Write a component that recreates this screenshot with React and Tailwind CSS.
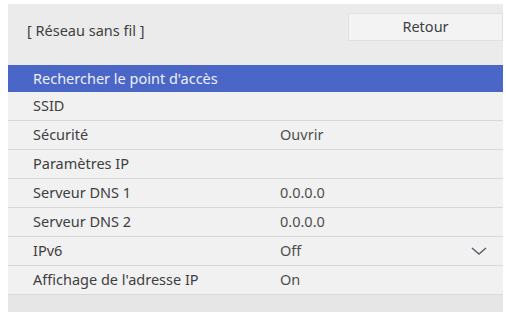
const rows = [
    { label: 'SSID', value: '' },
    { label: 'Sécurité', value: 'Ouvrir' },
    { label: 'Paramètres IP', value: '' },
    { label: 'Serveur DNS 1', value: '0.0.0.0' },
    { label: 'Serveur DNS 2', value: '0.0.0.0' },
    { label: 'IPv6', value: 'Off', chevron: true },
    { label: "Affichage de l'adresse IP", value: 'On' },
];

export default function App() {
    return (
        <div
            className="w-[506px] h-[312px] bg-white pt-[4px] pl-[8px] pr-[3px] overflow-hidden"
            style={{ fontFamily: '"Noto Sans", "Open Sans", sans-serif' }}
        >
            <div className="h-full bg-[#ebebeb] flex flex-col">
                <div className="h-[61px] flex items-start justify-between">
                    <div className="pl-[19px] pt-[16px] text-[14.5px] text-[#404040]">[ Réseau sans fil ]</div>
                    <button className="mt-[9px] w-[155px] h-[28px] bg-[#f3f3f3] border border-[#e0e0e0] text-[14.5px] text-[#404040]">
                        Retour
                    </button>
                </div>
                <div className="h-[27px] bg-[#4a66c6] flex items-center pl-[25px] text-[14.5px] text-[#eef0fb]">
                    Rechercher le point d'accès
                </div>
                {rows.map((row) => (
                    <div
                        key={row.label}
                        className="h-[29px] bg-[#f1f1f1] border-b border-[#d8d8d8] flex items-center text-[14.5px] text-[#404040]"
                    >
                        <div className="w-[272px] pl-[25px]">{row.label}</div>
                        <div className="flex-1 text-[#4e4e4e]">{row.value}</div>
                        {row.chevron && (
                            <svg className="mr-[16px]" width="16" height="8" viewBox="0 0 16 8" fill="none">
                                <polyline points="1,1 8,7 15,1" stroke="#5a5e70" strokeWidth="1.5" />
                            </svg>
                        )}
                    </div>
                ))}
                <div className="flex-1 bg-[#e6e6e6]" />
            </div>
        </div>
    );
}
